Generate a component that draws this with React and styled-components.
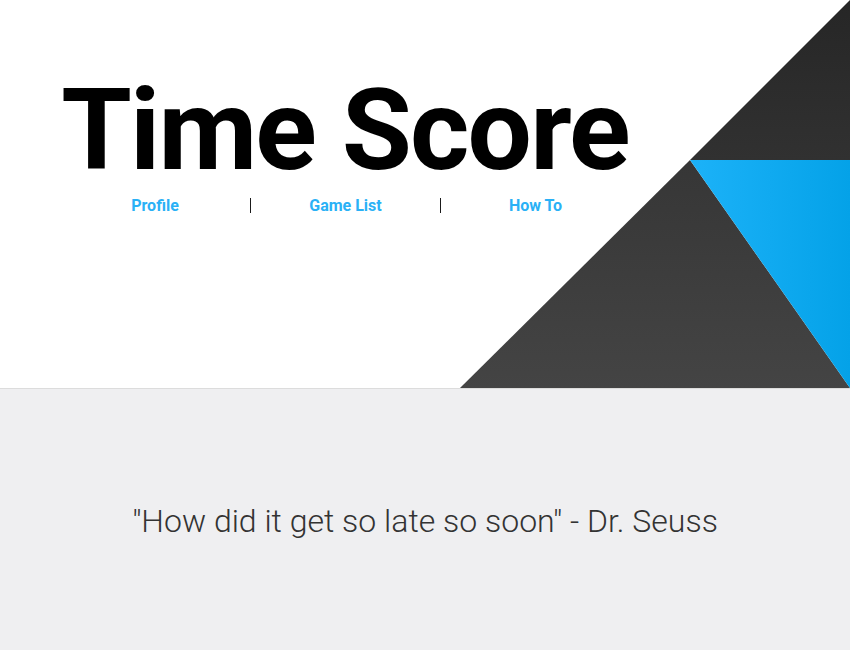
import React from 'react'
import styled, { createGlobalStyle } from 'styled-components'

const GlobalStyle = createGlobalStyle`
    html, body {
        margin: 0;
        padding: 0;
        background-color: #efeff1;
        font-family: Roboto, "Liberation Sans", sans-serif;
    }
`
const Page = styled.div`
    width: 100%;
    min-height: 650px;
    background-color: #efeff1;
`
const Header = styled.header`
    position: relative;
    width: 100%;
    height: 388px;
    background-color: white;
    border-bottom: 1px solid #dcdcdc;
    overflow: hidden;
`
const Shapes = styled.svg`
    position: absolute;
    right: 0;
    top: 0;
    width: 390px;
    height: 388px;
`
const HeaderWrap = styled.div`
    position: relative;
    width: 570px;
    padding: 75px 0 0 60px;
`
const Title = styled.h1`
    margin: 0;
    font-family: Roboto, "Liberation Sans", sans-serif;
    font-weight: 700;
    font-size: 114px;
    line-height: 110px;
    color: black;
    text-align: center;
    white-space: nowrap;
    letter-spacing: -1.8px;
`
const Nav = styled.ul`
    list-style: none;
    margin: 13px 0 0 0;
    padding: 0;
    display: grid;
    grid-template-columns: repeat(3, 1fr);
`
const NavItem = styled.li`
    display: flex;
    justify-content: center;
    align-items: center;
    height: 15px;
    font-size: 16px;
    font-weight: 700;
    color: #2ab1f6;
    border-left: ${(props) => props.first ? "none" : "1px solid #1a1a1a"};
`
const QuoteWrap = styled.section`
    display: flex;
    justify-content: center;
    padding-top: 113px;
`
const Quote = styled.p`
    margin: 0;
    font-size: 32px;
    font-weight: 300;
    color: #333;
`

function App() {
    const navs = ["Profile", "Game List", "How To"]
    return (
        <>
            <GlobalStyle />
            <Page>
                <Header>
                    <Shapes viewBox="0 0 390 388" preserveAspectRatio="none">
                        <defs>
                            <linearGradient id="darkTop" x1="0" y1="0" x2="0" y2="1">
                                <stop offset="0" stopColor="#262626" />
                                <stop offset="1" stopColor="#313131" />
                            </linearGradient>
                            <linearGradient id="darkBottom" x1="0" y1="0" x2="0" y2="1">
                                <stop offset="0" stopColor="#363636" />
                                <stop offset="1" stopColor="#444444" />
                            </linearGradient>
                            <linearGradient id="blue" x1="0" y1="0" x2="1" y2="0">
                                <stop offset="0" stopColor="#1cb2f8" />
                                <stop offset="1" stopColor="#04a2e8" />
                            </linearGradient>
                        </defs>
                        <polygon points="230,160 390,0 390,160" fill="url(#darkTop)" />
                        <polygon points="0,388 230,160 390,388" fill="url(#darkBottom)" />
                        <polygon points="230,160 390,160 390,388" fill="url(#blue)" />
                    </Shapes>
                    <HeaderWrap>
                        <Title>Time Score</Title>
                        <Nav>
                            {navs.map((e, i) => {
                                return <NavItem key={e} first={i === 0}>{e}</NavItem>
                            })}
                        </Nav>
                    </HeaderWrap>
                </Header>
                <QuoteWrap>
                    <Quote>"How did it get so late so soon" - Dr. Seuss</Quote>
                </QuoteWrap>
            </Page>
        </>
    )
}

export default App
